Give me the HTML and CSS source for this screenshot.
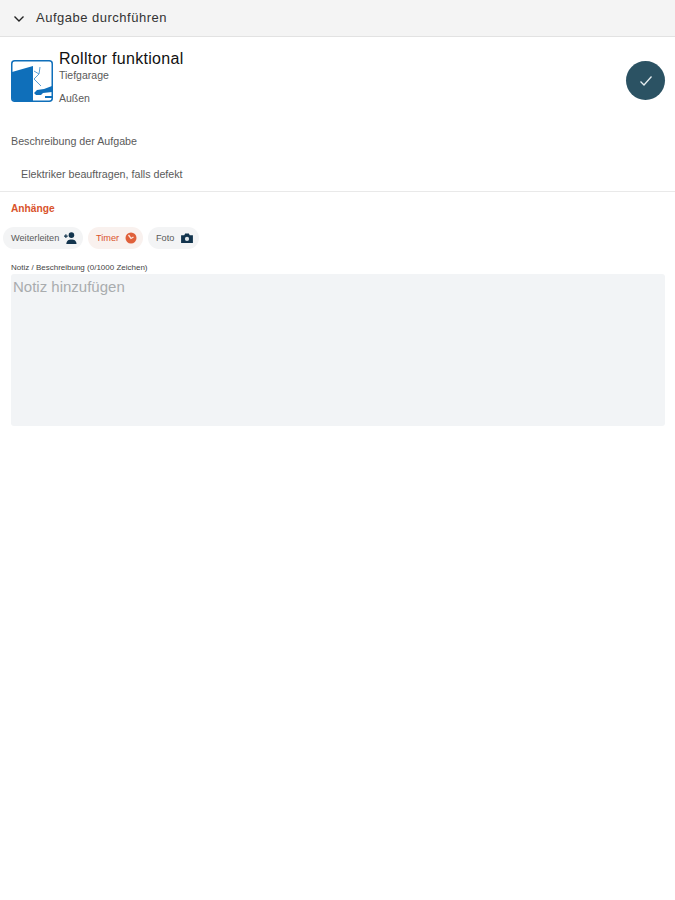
FILE: index.html
```html
<!DOCTYPE html>
<html lang="de">
<head>
  <meta charset="UTF-8" />
  <meta name="viewport" content="width=device-width, initial-scale=1.0"/>
  <title>Aufgabe durchführen</title>
  <link rel="stylesheet" href="styles.css">
</head>
<body>
  <header class="top-bar">
    <svg class="chevron" width="12" height="8" viewBox="0 0 12 8"><path d="M1.500 1.500 6 6l4.500-4.500" fill="none" stroke="#222" stroke-width="1.400"/></svg>
    <span>Aufgabe durchführen</span>
  </header>

  <section class="task">
    <svg class="task-icon" width="42" height="42" viewBox="0 0 42 42">
      <rect x="0.75" y="0.75" width="40.5" height="40.5" rx="3" fill="#fff" stroke="#0f6fba" stroke-width="1.5"/>
      <path d="M1 12 22 6V41H4a3 3 0 0 1-3-3z" fill="#0f6fba"/>
      <path d="M29 7 28 14 23 19l7 7M28 14l-5-3" fill="none" stroke="#5b9fd4" stroke-width="1"/>
      <path d="M23 33l3-3 7-1 8-3v6l-9 1-2 2h-5z" fill="#0f6fba"/>
      <path d="M34 36h7v2h-7z" fill="#0f6fba"/>
    </svg>
    <div class="task-text">
      <h1>Rolltor funktional</h1>
      <p class="task-place">Tiefgarage</p>
      <p class="task-place task-area">Außen</p>
    </div>
    <button class="done-btn" aria-label="Erledigt">
      <svg width="14" height="12" viewBox="0 0 14 12"><path d="M1.500 6.500 5 10l7.500-8.500" fill="none" stroke="#e6edf0" stroke-width="1.300"/></svg>
    </button>
  </section>

  <section class="description">
    <h2>Beschreibung der Aufgabe</h2>
    <p>Elektriker beauftragen, falls defekt</p>
  </section>

  <h2 class="attachments">Anhänge</h2>

  <div class="chips">
    <button class="chip chip-forward">Weiterleiten
      <svg width="13" height="12" viewBox="0 0 14 13"><circle cx="8" cy="3.400" r="3" fill="#12344d"/><path d="M2.500 13c0-3.600 2.400-5 5.500-5s5.500 1.400 5.500 5z" fill="#12344d"/><path d="M0 4.500h4M2 2.500v4" stroke="#12344d" stroke-width="1.200"/></svg>
    </button>
    <button class="chip chip-timer">Timer
      <svg width="12" height="12" viewBox="0 0 12 12"><circle cx="6" cy="6" r="5.500" fill="#e0603a"/><path d="M3.500 3 6 6.500l2.500-1.500" fill="none" stroke="#fbe6df" stroke-width="1.300"/></svg>
    </button>
    <button class="chip chip-photo">Foto
      <svg width="12" height="10" viewBox="0 0 13 11"><path d="M0 2.500h3.500L4.500.5h4l1 2H13V11H0z" fill="#12344d"/><circle cx="6.500" cy="6.500" r="2.300" fill="#dfe6ea"/></svg>
    </button>
  </div>

  <label class="note-label" for="note">Notiz / Beschreibung (0/1000 Zeichen)</label>
  <textarea class="note" id="note" placeholder="Notiz hinzufügen"></textarea>
</body>
</html>
```

FILE: styles.css
```css
:root {
  --dark-teal: #2b5263;
  --orange: #d9532c;
  --font-dark: #5a5a5a;
}

body {
  font-family: 'Liberation Sans', Arial, sans-serif;
  background-color: #ffffff;
  margin: 0;
  color: var(--font-dark);
}

h1, h2, p {
  margin: 0;
  font-weight: normal;
}

.top-bar {
  display: flex;
  align-items: center;
  gap: 11px;
  height: 35px;
  padding: 0 0 1px 13px;
  background-color: #f4f4f4;
  border-bottom: 1px solid #e2e2e2;
  font-size: 13px;
  letter-spacing: 0.5px;
  color: #333333;
}

.chevron {
  margin-top: 3px;
}

.task {
  display: flex;
  align-items: flex-start;
  height: 58px;
  padding: 14px 10px 0 11px;
}

.task-icon {
  margin-top: 9px;
  flex-shrink: 0;
}

.task-text {
  margin-left: 6px;
  flex: 1;
}

.task-text h1 {
  font-size: 16px;
  line-height: 16px;
  letter-spacing: 0.3px;
  color: #111111;
}

.task-place {
  font-size: 10.5px;
  line-height: 12px;
  margin-top: 2px;
}

.task-area {
  margin-top: 11px;
}

.done-btn {
  display: flex;
  align-items: center;
  justify-content: center;
  width: 39px;
  height: 39px;
  margin-top: 10px;
  padding: 0;
  border: none;
  border-radius: 50%;
  background-color: var(--dark-teal);
}

.description {
  margin-top: 26px;
  height: 56px;
  border-bottom: 1px solid #e9e9e9;
}

.description h2 {
  font-size: 10.7px;
  line-height: 12px;
  padding-left: 11px;
}

.description p {
  font-size: 10.7px;
  line-height: 12px;
  margin-top: 21px;
  padding-left: 21px;
}

.attachments {
  margin-top: 11px;
  padding-left: 11px;
  font-size: 10.2px;
  line-height: 12px;
  font-weight: bold;
  color: var(--orange);
}

.chips {
  display: flex;
  gap: 5px;
  margin-top: 12px;
  padding-left: 3px;
}

.chip {
  display: flex;
  align-items: center;
  justify-content: space-between;
  height: 22px;
  padding: 0 6px 0 8px;
  border: none;
  border-radius: 11px;
  background-color: #f3f4f5;
  font-family: inherit;
  font-size: 9.2px;
  color: var(--font-dark);
}

.chip-forward {
  width: 80px;
}

.chip-timer {
  width: 55px;
  background-color: #f9f1ee;
  color: var(--orange);
}

.chip-photo {
  width: 51px;
}

.note-label {
  display: block;
  margin-top: 14px;
  padding-left: 11px;
  font-size: 8px;
  line-height: 9px;
  color: #444444;
}

.note {
  display: block;
  box-sizing: border-box;
  width: 654px;
  height: 152px;
  margin: 2px 0 0 11px;
  padding: 4px 2px;
  border: none;
  border-radius: 3px;
  background-color: #f2f4f6;
  font-family: inherit;
  font-size: 15px;
  resize: none;
}

.note::placeholder {
  color: #a9acae;
}
```
